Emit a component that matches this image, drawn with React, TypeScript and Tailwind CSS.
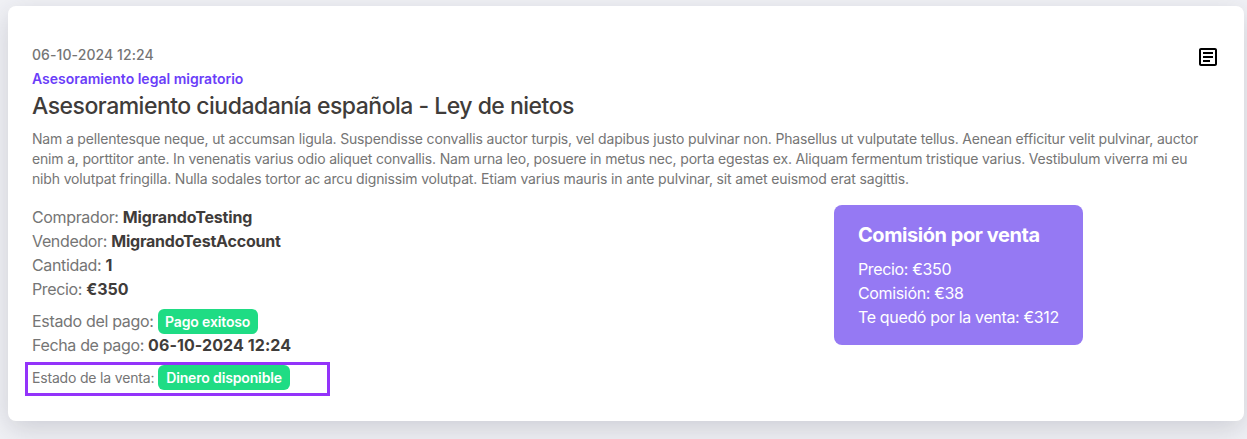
import { MdOutlineArticle } from 'react-icons/md'

const badge =
  'inline-flex h-[25px] items-center rounded-md bg-[#1fdc84] text-sm font-semibold tracking-[-0.15px] text-white'

export default function App() {
  return (
    <div className="h-[439px] overflow-hidden bg-[#f1f2f6] pt-1.5 pr-[3px] pl-2 font-['Inter',sans-serif] text-[#757575]">
      <article className="h-[415px] rounded-lg bg-white px-6 pt-[37px] shadow-[0_8px_28px_rgba(40,41,61,0.18)]">
        <header className="flex items-start justify-between">
          <div className="whitespace-nowrap">
            <p className="text-sm leading-6 font-medium tracking-[0.08px]">06-10-2024 12:24</p>
            <p className="text-sm leading-6 font-semibold text-[#6a3df9]">Asesoramiento legal migratorio</p>
            <h1 className="text-[23px] leading-[30px] font-medium tracking-[-0.51px] text-[#3f3c3a]">
              Asesoramiento ciudadanía española - Ley de nietos
            </h1>
          </div>
          <MdOutlineArticle className="mt-0.5 size-6 text-black" />
        </header>

        <p className="mt-2 text-sm leading-5 tracking-[-0.175px] whitespace-nowrap">
          Nam a pellentesque neque, ut accumsan ligula. Suspendisse convallis auctor turpis, vel dapibus justo pulvinar non. Phasellus ut vulputate tellus. Aenean efficitur velit pulvinar, auctor
          <br />
          enim a, porttitor ante. In venenatis varius odio aliquet convallis. Nam urna leo, posuere in metus nec, porta egestas ex. Aliquam fermentum tristique varius. Vestibulum viverra mi eu
          <br />
          <span className="tracking-[-0.155px]">
            nibh volutpat fringilla. Nulla sodales tortor ac arcu dignissim volutpat. Etiam varius mauris in ante pulvinar, sit amet euismod erat sagittis.
          </span>
        </p>

        <div className="mt-4 flex items-start">
          <div className="w-[802px] text-base leading-6 tracking-[-0.35px] whitespace-nowrap [&_strong]:font-bold [&_strong]:text-[#3f3c3a]">
            <p>Comprador: <strong className="tracking-[-0.15px]">MigrandoTesting</strong></p>
            <p>Vendedor: <strong className="tracking-[-0.2px]">MigrandoTestAccount</strong></p>
            <p>Cantidad: <strong>1</strong></p>
            <p>Precio: <strong className="tracking-normal">€350</strong></p>
            <p className="mt-2 flex h-6 items-center gap-1">
              <span className="tracking-[-0.32px]">Estado del pago:</span>
              <span className={`${badge} px-[7.5px] pt-px`}>Pago exitoso</span>
            </p>
            <p>Fecha de pago: <strong className="tracking-[0.08px]">06-10-2024 12:24</strong></p>
            <div className="mt-[5px] -ml-[7px] flex h-[34px] w-[305px] items-start gap-1 border-3 border-[#9333fa] pl-1 text-sm">
              <span className="leading-[26px] tracking-[-0.18px]">Estado de la venta:</span>
              <span className={`${badge} px-2`}>Dinero disponible</span>
            </div>
          </div>

          <aside className="h-[140px] w-[249px] rounded-lg bg-[#9579f3] px-6 pt-4 tracking-[-0.35px] whitespace-nowrap text-white">
            <h2 className="mb-2 text-xl leading-7 font-bold tracking-[-0.44px]">Comisión por venta</h2>
            <p>Precio: €350</p>
            <p>Comisión: €38</p>
            <p>Te quedó por la venta: €312</p>
          </aside>
        </div>
      </article>
    </div>
  )
}
